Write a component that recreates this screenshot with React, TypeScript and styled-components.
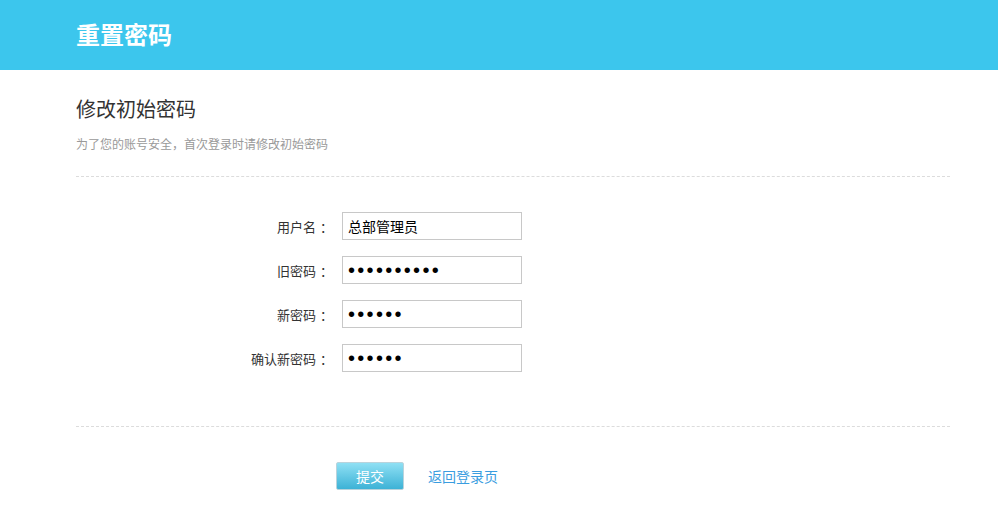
import styled, { createGlobalStyle } from "styled-components";

const GlobalStyle = createGlobalStyle`
  html, body {
    margin: 0;
    padding: 0;
    background: #fff;
    font-family: "Microsoft YaHei", "Noto Sans CJK SC", "Liberation Sans", sans-serif;
  }
`;

const FIELDS = [
  { label: "用户名", type: "text", value: "总部管理员" },
  { label: "旧密码", type: "password", value: "1234567890" },
  { label: "新密码", type: "password", value: "123456" },
  { label: "确认新密码", type: "password", value: "123456" },
];

export default function App() {
  return (
    <>
      <GlobalStyle />
      <Header>
        <HeaderTitle>重置密码</HeaderTitle>
      </Header>
      <Main>
        <PageTitle>修改初始密码</PageTitle>
        <Hint>为了您的账号安全，首次登录时请修改初始密码</Hint>
        <Divider />
        <Form>
          {FIELDS.map((f) => (
            <Row key={f.label}>
              <Label>
                {f.label}
                <Colon>：</Colon>
              </Label>
              <Input
                type={f.type}
                defaultValue={f.value}
                readOnly
                $secret={f.type === "password"}
              />
            </Row>
          ))}
        </Form>
        <Divider />
        <Actions>
          <SubmitButton type="button">提交</SubmitButton>
          <BackLink href="#">返回登录页</BackLink>
        </Actions>
      </Main>
    </>
  );
}

const Header = styled.header`
  height: 70px;
  background: #3cc6ed;
  display: flex;
  align-items: center;
  padding-left: 76px;
`;

const HeaderTitle = styled.h1`
  margin: 0;
  color: #fff;
  font-size: 24px;
  font-weight: bold;
  line-height: 1;
  padding-bottom: 2px;
`;

const Main = styled.main`
  width: 874px;
  margin-left: 76px;
  padding-top: 25px;
`;

const PageTitle = styled.h2`
  margin: 0;
  font-size: 20px;
  font-weight: normal;
  line-height: 28px;
  color: #333;
`;

const Hint = styled.p`
  margin: 11px 0 0;
  font-size: 12px;
  line-height: 20px;
  color: #999;
`;

const Divider = styled.div`
  margin-top: 22px;
  border-top: 1px dashed #dcdcdc;
`;

const Form = styled.form`
  display: flex;
  flex-direction: column;
  gap: 16px;
  padding: 35px 0 32px;
`;

const Row = styled.div`
  display: flex;
  align-items: center;
  height: 28px;
`;

const Label = styled.label`
  width: 254px;
  margin-right: 12px;
  text-align: right;
  font-size: 13px;
  color: #333;
`;

const Colon = styled.span`
  display: inline-block;
  box-sizing: border-box;
  width: 14px;
  padding-left: 4px;
  text-align: left;
`;

const Input = styled.input<{ $secret?: boolean }>`
  box-sizing: border-box;
  width: 180px;
  height: 28px;
  padding: 0 5px;
  border: 1px solid #c8c8c8;
  border-radius: 0;
  font-family: ${(p) =>
    p.$secret
      ? `"Liberation Sans", Arial, sans-serif`
      : `"Microsoft YaHei", "Noto Sans CJK SC", sans-serif`};
  font-size: ${(p) => (p.$secret ? "20px" : "14px")};
  letter-spacing: ${(p) => (p.$secret ? "2.3px" : "0")};
  color: #000;
  outline: none;
`;

const Actions = styled.div`
  display: flex;
  align-items: center;
  gap: 24px;
  padding: 35px 0 0 260px;
`;

const SubmitButton = styled.button`
  box-sizing: border-box;
  width: 68px;
  height: 28px;
  border: 1px solid #b9d3dc;
  border-radius: 2px;
  background: linear-gradient(to bottom, #8fe0f4, #3db2d6);
  color: #fff;
  font-family: inherit;
  font-size: 14px;
  cursor: pointer;
`;

const BackLink = styled.a`
  font-size: 14px;
  color: #3a9de0;
  text-decoration: none;
`;
